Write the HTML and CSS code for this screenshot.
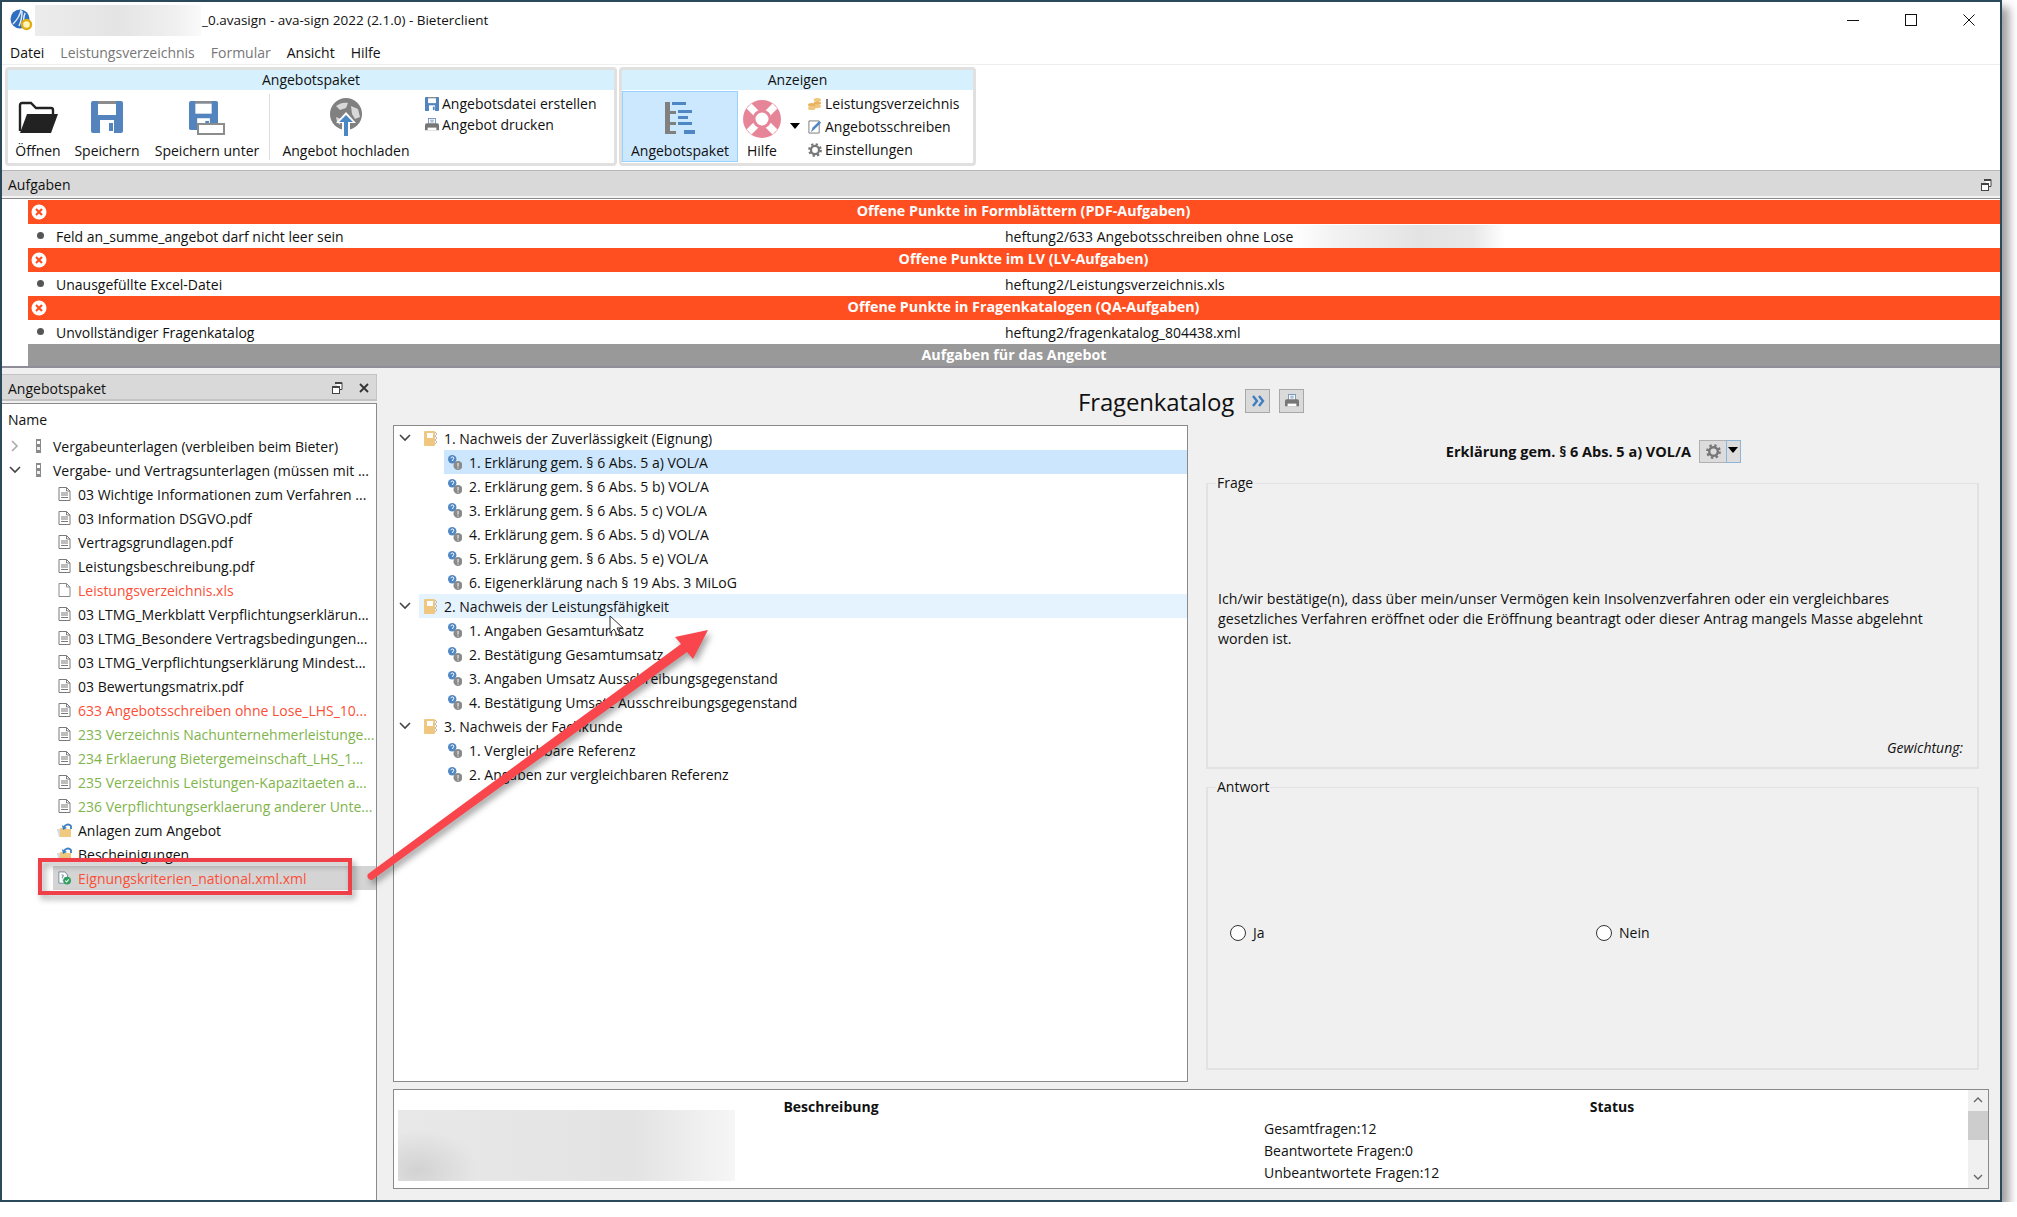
FILE: index.html
```html
<!DOCTYPE html>
<html lang="de">

<head>
    <meta charset="UTF-8" />
    <title>ava-sign 2022 - Bieterclient</title>
    <link rel="stylesheet" href="styles.css">
</head>

<body>
    <svg class="defs" width="0" height="0">
        <symbol id="doc" viewBox="0 0 13 14">
            <path d="M1 .5h7.5L12 4v9.5H1z" fill="#fff" stroke="#7a7a7a" />
            <path d="M8.5 .5V4H12M3 6h7M3 8h7M3 10.5h7" fill="none" stroke="#7a7a7a" />
        </symbol>
        <symbol id="doc-empty" viewBox="0 0 13 14">
            <path d="M1 .5h7.5L12 4v9.5H1z" fill="#fff" stroke="#8a8a8a" />
            <path d="M8.5 .5V4H12" fill="none" stroke="#8a8a8a" />
        </symbol>
        <symbol id="binder" viewBox="0 0 7 14">
            <rect x="1" y="0" width="5" height="14" fill="#8a8a8a" />
            <rect x="2" y="2" width="3" height="3" fill="#fff" />
            <rect x="2" y="8" width="3" height="3" fill="#eee" />
        </symbol>
        <symbol id="attach" viewBox="0 0 15 14">
            <path d="M3 5h4l1 1h6v8H3z" fill="#efca7f" />
            <path d="M0 6h3v8H2z" fill="#d8d8d8" />
            <path d="M7 4.5a4 4 0 0 1 7-1.5v3" fill="none" stroke="#3f7fc0" stroke-width="1.8" />
            <path d="M5 2l1 5 4-2z" fill="#3f7fc0" />
        </symbol>
        <symbol id="xml-ok" viewBox="0 0 15 15">
            <path d="M1 .5h7L11 4v9.5H1z" fill="#fff" stroke="#6b8399" />
            <path d="M4 4h2v2H5v2M5 10h1" fill="none" stroke="#6b8399" />
            <circle cx="10.5" cy="10.5" r="4.5" fill="#2e9e5e" />
            <path d="M8.3 10.5l1.6 1.6 2.6-3" fill="none" stroke="#fff" stroke-width="1.2" />
        </symbol>
        <symbol id="book" viewBox="0 0 13 15">
            <rect x="0" y="0" width="11" height="15" rx="1" fill="#efc77e" />
            <rect x="3" y="2" width="6" height="5" fill="#fff" />
            <path d="M11 1l2 2-2 2 2 2-2 2 2 2-2 2" fill="none" stroke="#bbb" />
        </symbol>
        <symbol id="question" viewBox="0 0 14 15">
            <circle cx="4.2" cy="4.2" r="4.2" fill="#4f87c4" />
            <circle cx="10" cy="10.5" r="4.5" fill="#8a8a8a" />
            <path d="M3 3.2a1.4 1.4 0 1 1 1.7 1.5V6" fill="none" stroke="#fff" />
            <path d="M10 8v3.5M10 12.5v1" stroke="#fff" />
        </symbol>
        <symbol id="chev-down" viewBox="0 0 12 8">
            <path d="M1 1l5 5 5-5" fill="none" stroke="#444" stroke-width="1.6" />
        </symbol>
        <symbol id="chev-right" viewBox="0 0 8 12">
            <path d="M1 1l5 5-5 5" fill="none" stroke="#aaa" stroke-width="1.6" />
        </symbol>
        <symbol id="restore" viewBox="0 0 11 12">
            <path d="M3 .5h7v7H8" fill="#fff" stroke="#444" />
            <rect x="3" y="0" width="7" height="2" fill="#444" />
            <rect x=".5" y="4.5" width="7" height="7" fill="#fff" stroke="#444" />
            <rect x="0" y="4" width="8" height="2" fill="#444" />
        </symbol>
        <symbol id="save" viewBox="0 0 32 32">
            <path d="M0 2a2 2 0 0 1 2-2h28a2 2 0 0 1 2 2v28a2 2 0 0 1-2 2H2a2 2 0 0 1-2-2z" fill="#5384bd" />
            <rect x="7" y="0" width="18" height="3" fill="#8c8c8c" />
            <rect x="7" y="3" width="18" height="11" fill="#fff" />
            <rect x="9" y="19" width="14" height="13" fill="#fff" />
            <rect x="18" y="22" width="4" height="8" fill="#5384bd" />
        </symbol>
        <symbol id="gear" viewBox="0 0 16 16">
            <circle cx="8" cy="8" r="4.6" fill="none" stroke="#777" stroke-width="2.6" />
            <circle cx="8" cy="8" r="6.7" fill="none" stroke="#777" stroke-width="2.4" stroke-dasharray="2.6 2.66" />
        </symbol>
        <symbol id="printer" viewBox="0 0 16 16">
            <rect x="4" y="0.5" width="8" height="7" fill="#fff" stroke="#6f8fb5" />
            <path d="M6 2.5h4M6 4.5h4" stroke="#6f8fb5" />
            <path d="M0 8a2 2 0 0 1 2-2h12a2 2 0 0 1 2 2v6H0z" fill="#777" />
            <rect x="3" y="11" width="10" height="3" fill="#fff" />
        </symbol>
    </svg>

    <div class="window">
        <header class="titlebar">
            <svg class="logo" viewBox="0 0 24 22">
                <circle cx="10" cy="10" r="9.5" fill="#2f6fc0" />
                <path d="M3 15C7 11 10 7 11 1M9 17c2-4 3-8 3-15M14 14c-1-3 0-7 1-10" fill="none" stroke="#dfeafa" stroke-width="1.5" />
                <circle cx="16.5" cy="15.5" r="4.5" fill="#fff6b8" stroke="#e0ad12" stroke-width="2.4" />
            </svg>
            <div class="blur blur-title"></div>
            <span class="title-text">_0.avasign - ava-sign 2022 (2.1.0) - Bieterclient</span>
            <div class="win-controls">
                <svg viewBox="0 0 12 12"><path d="M0 6.5h12" stroke="#111" /></svg>
                <svg viewBox="0 0 12 12"><rect x=".5" y=".5" width="11" height="11" fill="none" stroke="#111" /></svg>
                <svg viewBox="0 0 12 12"><path d="M.5 .5l11 11M11.5 .5l-11 11" stroke="#111" /></svg>
            </div>
        </header>

        <nav class="menubar">
            <a>Datei</a>
            <a class="off">Leistungsverzeichnis</a>
            <a class="off">Formular</a>
            <a>Ansicht</a>
            <a>Hilfe</a>
        </nav>

        <section class="ribbon">
            <div class="rgroup rgroup-paket">
                <div class="rgroup-head">Angebotspaket</div>
                <div class="rgroup-body">
                    <div class="rbtn rbtn-open">
                        <svg class="big folder" viewBox="0 0 40 32">
                            <path d="M2 30V4a2 2 0 0 1 2-2h9l5 5h15a2 2 0 0 1 2 2v4" fill="none" stroke="#222" stroke-width="2.4" />
                            <path d="M9 13h31l-7 19H2z" fill="#222" />
                        </svg>
                        <span>Öffnen</span>
                    </div>
                    <div class="rbtn rbtn-save">
                        <svg class="big save"><use href="#save" /></svg>
                        <span>Speichern</span>
                    </div>
                    <div class="rbtn rbtn-saveas">
                        <svg class="big saveas" viewBox="0 0 36 34">
                            <use href="#save" width="29" height="29" />
                            <rect x="9" y="23" width="26" height="10" fill="#fff" stroke="#8c8c8c" stroke-width="2" />
                        </svg>
                        <span>Speichern unter</span>
                    </div>
                    <div class="rsep"></div>
                    <div class="rbtn rbtn-upload">
                        <svg class="big upload" viewBox="0 0 32 38">
                            <circle cx="16" cy="16" r="16" fill="#808080" />
                            <path d="M6 8c4-3 8-4 12-3l-2 5-6 2zM21 8l7 3 2 8-5 2-3-5zM6 19l5 2-1 6-3-3z" fill="#d8d8d8" />
                            <path d="M16 14l10 11h-6v13h-8V25H6z" fill="#fff" />
                            <path d="M16 17l7 7h-5v14h-4V24H9z" fill="#4a87c5" />
                        </svg>
                        <span>Angebot hochladen</span>
                    </div>
                    <div class="rsmall">
                        <div class="sitem"><svg class="small"><use href="#save" /></svg>Angebotsdatei erstellen</div>
                        <div class="sitem"><svg class="small"><use href="#printer" /></svg>Angebot drucken</div>
                    </div>
                </div>
            </div>
            <div class="rgroup rgroup-view">
                <div class="rgroup-head">Anzeigen</div>
                <div class="rgroup-body">
                    <div class="rbtn rbtn-active">
                        <svg class="big pakettree" viewBox="0 0 30 32">
                            <path d="M0 0h5v32H0zM5 9h6v3H5zM5 20h6v3H5zM5 29h6v3H5z" fill="#808080" />
                            <path d="M7 0h14v3H7zM13 8h14v3H13zM13 14h10v3H13zM13 20h14v3H13zM19 28h11v4H19z" fill="#4f87c4" />
                        </svg>
                        <span>Angebotspaket</span>
                    </div>
                    <div class="rbtn rbtn-help">
                        <svg class="big lifebuoy" viewBox="0 0 38 38">
                            <circle cx="19" cy="19" r="19" fill="#e78598" />
                            <circle cx="19" cy="19" r="9" fill="#fff" />
                            <path d="M6 6l8 8M32 6l-8 8M6 32l8-8M32 32l-8-8" stroke="#fff" stroke-width="7" />
                            <circle cx="19" cy="19" r="8" fill="#fff" stroke="#e78598" stroke-width="3" />
                        </svg>
                        <span>Hilfe</span>
                    </div>
                    <div class="ddarrow"></div>
                    <div class="rsmall rsmall-view">
                        <div class="sitem">
                            <svg class="small" viewBox="0 0 15 14">
                                <ellipse cx="10" cy="2.5" rx="4" ry="2" fill="#efc77e" />
                                <ellipse cx="10" cy="6" rx="4" ry="2" fill="#e8b35c" />
                                <ellipse cx="10" cy="9.5" rx="4" ry="2" fill="#efc77e" />
                                <ellipse cx="4" cy="8" rx="4" ry="2" fill="#e8b35c" />
                                <ellipse cx="4" cy="11.5" rx="4" ry="2" fill="#efc77e" />
                            </svg>Leistungsverzeichnis
                        </div>
                        <div class="sitem">
                            <svg class="small" viewBox="0 0 15 15">
                                <path d="M1 1h11v13H1z" fill="#fff" stroke="#777" />
                                <path d="M3 13l2-5 7-7 2 2-7 7z" fill="#4f87c4" />
                            </svg>Angebotsschreiben
                        </div>
                        <div class="sitem"><svg class="small"><use href="#gear" /></svg>Einstellungen</div>
                    </div>
                </div>
            </div>
        </section>

        <div class="dockhead dockhead-tasks">
            <span>Aufgaben</span>
            <svg class="dockicon"><use href="#restore" /></svg>
        </div>

        <section class="tasks">
            <div class="task-head"><svg class="err" viewBox="0 0 16 16"><circle cx="8" cy="8" r="7.5" fill="#fff" /><path d="M5 5l6 6M11 5l-6 6" stroke="#ff4f21" stroke-width="2.2" /></svg><span>Offene Punkte in Formblättern (PDF-Aufgaben)</span></div>
            <div class="task-row">
                <i></i><span class="task-name">Feld an_summe_angebot darf nicht leer sein</span>
                <span class="task-file">heftung2/633 Angebotsschreiben ohne Lose<b class="blur blur-task"></b></span>
            </div>
            <div class="task-head"><svg class="err" viewBox="0 0 16 16"><circle cx="8" cy="8" r="7.5" fill="#fff" /><path d="M5 5l6 6M11 5l-6 6" stroke="#ff4f21" stroke-width="2.2" /></svg><span>Offene Punkte im LV (LV-Aufgaben)</span></div>
            <div class="task-row">
                <i></i><span class="task-name">Unausgefüllte Excel-Datei</span>
                <span class="task-file">heftung2/Leistungsverzeichnis.xls</span>
            </div>
            <div class="task-head"><svg class="err" viewBox="0 0 16 16"><circle cx="8" cy="8" r="7.5" fill="#fff" /><path d="M5 5l6 6M11 5l-6 6" stroke="#ff4f21" stroke-width="2.2" /></svg><span>Offene Punkte in Fragenkatalogen (QA-Aufgaben)</span></div>
            <div class="task-row">
                <i></i><span class="task-name">Unvollständiger Fragenkatalog</span>
                <span class="task-file">heftung2/fragenkatalog_804438.xml</span>
            </div>
            <div class="task-foot">Aufgaben für das Angebot</div>
        </section>

        <div class="workspace">
            <aside class="side">
                <div class="dockhead dockhead-side">
                    <span>Angebotspaket</span>
                    <svg class="dockicon"><use href="#restore" /></svg>
                    <svg class="dockclose" viewBox="0 0 10 10"><path d="M1 1l8 8M9 1l-8 8" stroke="#333" stroke-width="1.8" /></svg>
                </div>
                <div class="sidetree">
                    <div class="sidename">Name</div>
                    <div class="node"><svg class="chev-r"><use href="#chev-right" /></svg><svg class="binder"><use href="#binder" /></svg>Vergabeunterlagen (verbleiben beim Bieter)</div>
                    <div class="node"><svg class="chev-d"><use href="#chev-down" /></svg><svg class="binder"><use href="#binder" /></svg>Vergabe- und Vertragsunterlagen (müssen mit ...</div>
                    <div class="leaf"><svg><use href="#doc" /></svg>03 Wichtige Informationen zum Verfahren ...</div>
                    <div class="leaf"><svg><use href="#doc" /></svg>03 Information DSGVO.pdf</div>
                    <div class="leaf"><svg><use href="#doc" /></svg>Vertragsgrundlagen.pdf</div>
                    <div class="leaf"><svg><use href="#doc" /></svg>Leistungsbeschreibung.pdf</div>
                    <div class="leaf red"><svg><use href="#doc-empty" /></svg>Leistungsverzeichnis.xls</div>
                    <div class="leaf"><svg><use href="#doc" /></svg>03 LTMG_Merkblatt Verpflichtungserklärun...</div>
                    <div class="leaf"><svg><use href="#doc" /></svg>03 LTMG_Besondere Vertragsbedingungen...</div>
                    <div class="leaf"><svg><use href="#doc" /></svg>03 LTMG_Verpflichtungserklärung Mindest...</div>
                    <div class="leaf"><svg><use href="#doc" /></svg>03 Bewertungsmatrix.pdf</div>
                    <div class="leaf red"><svg><use href="#doc" /></svg>633 Angebotsschreiben ohne Lose_LHS_10...</div>
                    <div class="leaf green"><svg><use href="#doc" /></svg>233 Verzeichnis Nachunternehmerleistunge...</div>
                    <div class="leaf green"><svg><use href="#doc" /></svg>234 Erklaerung Bietergemeinschaft_LHS_1...</div>
                    <div class="leaf green"><svg><use href="#doc" /></svg>235 Verzeichnis Leistungen-Kapazitaeten a...</div>
                    <div class="leaf green"><svg><use href="#doc" /></svg>236 Verpflichtungserklaerung anderer Unte...</div>
                    <div class="leaf leaf-att"><svg><use href="#attach" /></svg>Anlagen zum Angebot</div>
                    <div class="leaf leaf-att"><svg><use href="#attach" /></svg>Bescheinigungen</div>
                    <div class="leaf red selected"><svg><use href="#xml-ok" /></svg>Eignungskriterien_national.xml.xml</div>
                </div>
            </aside>

            <main class="main">
                <div class="cat-head">
                    <h1>Fragenkatalog</h1>
                    <button class="toolbtn">
                        <svg viewBox="0 0 14 14"><path d="M2 2l4 5-4 5M8 2l4 5-4 5" fill="none" stroke="#3f7fc0" stroke-width="2.4" /></svg>
                    </button>
                    <button class="toolbtn">
                        <svg><use href="#printer" /></svg>
                    </button>
                </div>

                <div class="cat-body">
                    <div class="qtree">
                        <div class="qgroup"><svg class="chev-d"><use href="#chev-down" /></svg><svg class="book"><use href="#book" /></svg>1. Nachweis der Zuverlässigkeit (Eignung)</div>
                        <div class="qitem current"><svg><use href="#question" /></svg>1. Erklärung gem. § 6 Abs. 5 a) VOL/A</div>
                        <div class="qitem"><svg><use href="#question" /></svg>2. Erklärung gem. § 6 Abs. 5 b) VOL/A</div>
                        <div class="qitem"><svg><use href="#question" /></svg>3. Erklärung gem. § 6 Abs. 5 c) VOL/A</div>
                        <div class="qitem"><svg><use href="#question" /></svg>4. Erklärung gem. § 6 Abs. 5 d) VOL/A</div>
                        <div class="qitem"><svg><use href="#question" /></svg>5. Erklärung gem. § 6 Abs. 5 e) VOL/A</div>
                        <div class="qitem"><svg><use href="#question" /></svg>6. Eigenerklärung nach § 19 Abs. 3 MiLoG</div>
                        <div class="qgroup hover"><svg class="chev-d"><use href="#chev-down" /></svg><svg class="book"><use href="#book" /></svg>2. Nachweis der Leistungsfähigkeit</div>
                        <div class="qitem"><svg><use href="#question" /></svg>1. Angaben Gesamtumsatz</div>
                        <div class="qitem"><svg><use href="#question" /></svg>2. Bestätigung Gesamtumsatz</div>
                        <div class="qitem"><svg><use href="#question" /></svg>3. Angaben Umsatz Ausschreibungsgegenstand</div>
                        <div class="qitem"><svg><use href="#question" /></svg>4. Bestätigung Umsatz Ausschreibungsgegenstand</div>
                        <div class="qgroup"><svg class="chev-d"><use href="#chev-down" /></svg><svg class="book"><use href="#book" /></svg>3. Nachweis der Fachkunde</div>
                        <div class="qitem"><svg><use href="#question" /></svg>1. Vergleichbare Referenz</div>
                        <div class="qitem"><svg><use href="#question" /></svg>2. Angaben zur vergleichbaren Referenz</div>
                    </div>

                    <div class="detail">
                        <div class="detail-head">
                            <strong>Erklärung gem. § 6 Abs. 5 a) VOL/A</strong>
                            <div class="splitbtn">
                                <span class="split-main"><svg><use href="#gear" /></svg></span>
                                <span class="split-drop"><i class="ddarrow"></i></span>
                            </div>
                        </div>
                        <fieldset class="field field-q">
                            <legend>Frage</legend>
                            <div class="q-inner">
                                <p>Ich/wir bestätige(n), dass über mein/unser Vermögen kein Insolvenzverfahren oder ein vergleichbares<br>gesetzliches Verfahren eröffnet oder die Eröffnung beantragt oder dieser Antrag mangels Masse abgelehnt<br>worden ist.</p>
                                <em>Gewichtung:</em>
                            </div>
                        </fieldset>
                        <fieldset class="field field-a">
                            <legend>Antwort</legend>
                            <div class="a-inner">
                                <label><input type="radio" name="antwort"> Ja</label>
                                <label><input type="radio" name="antwort"> Nein</label>
                            </div>
                        </fieldset>
                    </div>
                </div>

                <div class="summary">
                    <div class="sum-desc">
                        <h2>Beschreibung</h2>
                        <div class="blur blur-desc"></div>
                    </div>
                    <div class="sum-status">
                        <h2>Status</h2>
                        <p>Gesamtfragen:12</p>
                        <p>Beantwortete Fragen:0</p>
                        <p>Unbeantwortete Fragen:12</p>
                    </div>
                    <div class="scrollbar">
                        <svg viewBox="0 0 10 6"><path d="M1 5l4-4 4 4" fill="none" stroke="#666" stroke-width="1.4" /></svg>
                        <div class="scroll-thumb"></div>
                        <svg class="scroll-down" viewBox="0 0 10 6"><path d="M1 1l4 4 4-4" fill="none" stroke="#666" stroke-width="1.4" /></svg>
                    </div>
                </div>
            </main>
        </div>

        <!-- annotation drawn on top of the screenshot -->
        <svg class="annotation" viewBox="0 0 2001 1201">
            <path d="M610 616v17l4-4 3 6 3-1-3-6h6z" fill="#fff" stroke="#333" />
            <g class="marks">
                <rect x="40" y="860" width="310" height="33" fill="none" stroke="#ef3f49" stroke-width="4" />
                <path d="M368 874L681 644L675 637L708 630L693 659L687 652L372 880a4 4 0 0 1-4-6z" fill="#f9464c" />
            </g>
        </svg>
    </div>
</body>

</html>
```

FILE: styles.css
```css
* {
    padding: 0;
    margin: 0;
    box-sizing: border-box;
}

body {
    font-family: "Open Sans", "Noto Sans", Arial, sans-serif;
    font-size: 14px;
    color: #111;
    background-color: #fff;
}

.defs {
    position: absolute;
}

.window {
    position: relative;
    display: flex;
    flex-direction: column;
    width: 2002px;
    height: 1202px;
    border: 2px solid #2a4a5c;
    background-color: #fff;
    box-shadow: 7px 7px 9px rgba(0, 0, 0, .38);
    overflow: visible;
}

.blur {
    display: block;
}

/* title bar */
.titlebar {
    display: flex;
    align-items: center;
    height: 36px;
    flex: none;
}

.logo {
    width: 24px;
    height: 22px;
    margin: 0 1px 0 8px;
}

.blur-title {
    width: 166px;
    height: 31px;
    background: linear-gradient(90deg, #ececec, #e4e4e4 50%, #f0f0f0 85%, #fafafa);
}

.title-text {
    margin-left: 1px;
    font-size: 13.5px;
}

.win-controls {
    display: flex;
    gap: 46px;
    margin-left: auto;
    margin-right: 25px;
}

.win-controls svg {
    width: 12px;
    height: 12px;
}

/* menu */
.menubar {
    display: flex;
    align-items: center;
    gap: 16px;
    height: 27px;
    flex: none;
    padding: 2px 0 0 8px;
    border-bottom: 1px solid #eee;
}

.off {
    color: #777;
}

/* ribbon */
.ribbon {
    display: flex;
    gap: 2px;
    height: 105px;
    flex: none;
    padding: 2px 0 0 3px;
}

.rgroup {
    height: 99px;
    border: 3px solid #e0e0e0;
    border-radius: 4px;
}

.rgroup-paket {
    width: 612px;
}

.rgroup-view {
    width: 357px;
}

.rgroup-head {
    height: 20px;
    line-height: 20px;
    text-align: center;
    background-color: #d6f0fe;
}

.rgroup-body {
    display: flex;
    height: 73px;
}

.rbtn {
    display: flex;
    flex-direction: column;
    align-items: center;
    justify-content: flex-end;
    padding-bottom: 3px;
    white-space: nowrap;
}

.rbtn-open {
    width: 58px;
    margin-left: 1px;
}

.rbtn-open .folder {
    width: 40px;
    height: 32px;
    margin-bottom: 8px;
}

.rbtn-save {
    width: 68px;
    margin-left: 6px;
}

.big.save {
    width: 32px;
    height: 32px;
    margin-bottom: 8px;
}

.rbtn-saveas {
    width: 106px;
    margin-left: 13px;
}

.rbtn-saveas .saveas {
    width: 36px;
    height: 34px;
    margin-bottom: 6px;
}

.rsep {
    width: 1px;
    height: 66px;
    margin: 4px 9px 0 9px;
    background-color: #ddd;
}

.rbtn-upload {
    width: 134px;
}

.rbtn-upload .upload {
    width: 32px;
    height: 38px;
    margin-bottom: 5px;
}

.rsmall {
    display: flex;
    flex-direction: column;
    margin-left: 12px;
    padding-top: 3px;
}

.sitem {
    display: flex;
    align-items: center;
    gap: 3px;
    height: 21px;
    white-space: nowrap;
}

.sitem svg.small {
    width: 14px;
    height: 14px;
    flex: none;
}

.rbtn-active {
    width: 116px;
    height: 71px;
    margin-top: 1px;
    padding-bottom: 1px;
    background-color: #cce8ff;
    border: 1px solid #99d1ff;
}

.pakettree {
    width: 30px;
    height: 32px;
    margin-bottom: 7px;
}

.rbtn-help {
    width: 46px;
    margin-left: 1px;
}

.lifebuoy {
    width: 38px;
    height: 38px;
    margin-bottom: 3px;
}

.ddarrow {
    display: block;
    width: 0;
    height: 0;
    margin: 33px 0 0 5px;
    border-left: 5px solid transparent;
    border-right: 5px solid transparent;
    border-top: 6px solid #000;
}

.rsmall-view {
    margin-left: 8px;
    padding-top: 2px;
}

.rsmall-view .sitem {
    height: 23px;
}

/* dock headers */
.dockhead {
    display: flex;
    align-items: center;
    flex: none;
    padding-left: 6px;
    background-color: #d9d9d9;
    border: 1px solid #c4c4c4;
}

.dockhead-tasks {
    height: 29px;
    border-width: 1px 0;
    border-top-color: #b8b8b8;
    border-bottom-color: #8a8a8a;
    box-shadow: inset 0 -2px #f3f3f3;
}

.dockicon {
    width: 11px;
    height: 12px;
    margin-left: auto;
    margin-right: 8px;
}

.dockhead-side {
    height: 27px;
    padding-top: 2px;
    border-width: 1px 1px 2px 0;
}

.dockhead-side .dockicon {
    margin-right: 16px;
}

.dockclose {
    width: 10px;
    height: 10px;
    margin-right: 7px;
}

/* tasks */
.tasks {
    height: 169px;
    flex: none;
    padding: 1px 0 0 26px;
    border-bottom: 2px solid #8e8e98;
}

.task-head {
    display: flex;
    align-items: center;
    height: 24px;
    padding: 0 0 3px 3px;
    color: #fff;
    font-weight: 700;
    font-size: 14.25px;
    background-color: #ff4f21;
}

.task-head span {
    flex: 1;
    text-align: center;
}

.err {
    width: 16px;
    height: 16px;
    margin-top: 3px;
}

.task-row {
    display: flex;
    align-items: center;
    height: 24px;
    white-space: nowrap;
}

.task-row i {
    width: 7px;
    height: 7px;
    margin: 0 12px 2px 9px;
    border-radius: 50%;
    background-color: #555;
}

.task-name {
    width: 949px;
}

.task-file {
    display: flex;
    align-items: center;
}

.blur-task {
    width: 212px;
    height: 23px;
    background: linear-gradient(90deg, #fff, #f2f2f2 20%, #e3e3e3 60%, #e8e8e8 85%, #fff);
}

.task-foot {
    height: 22px;
    line-height: 22px;
    text-align: center;
    color: #fff;
    font-weight: 700;
    font-size: 14.25px;
    background-color: #999;
}

/* workspace */
.workspace {
    display: flex;
    flex: 1;
    min-height: 0;
    background-color: #f0f0f0;
}

.side {
    display: flex;
    flex-direction: column;
    width: 375px;
    flex: none;
    padding-top: 6px;
}

.sidetree {
    flex: 1;
    margin-top: 2px;
    padding-top: 4px;
    background-color: #fff;
    border-top: 1px solid #8a8a8a;
    border-right: 1px solid #8a8a8a;
    white-space: nowrap;
    overflow: hidden;
}

.sidename {
    height: 24px;
    line-height: 24px;
    margin-bottom: 2px;
    padding-left: 6px;
}

.node,
.leaf {
    display: flex;
    align-items: center;
    height: 24px;
    overflow: hidden;
}

.chev-r {
    width: 8px;
    height: 12px;
    margin: 0 16px 0 9px;
}

.chev-d {
    width: 12px;
    height: 8px;
    margin: 0 14px 0 7px;
}

.binder {
    width: 7px;
    height: 14px;
    margin-right: 11px;
}

.leaf {
    padding-left: 56px;
}

.leaf svg {
    width: 13px;
    height: 14px;
    margin-right: 7px;
    flex: none;
}

.leaf-att svg {
    width: 15px;
    height: 14px;
    margin: 0 6px 0 -1px;
}

.red {
    color: #fb4f38;
}

.green {
    color: #7fb44c;
}

.selected {
    margin-left: 51px;
    padding-left: 5px;
    background-color: #d4d4d4;
}

/* main area */
.main {
    display: flex;
    flex-direction: column;
    flex: 1;
    min-width: 0;
    padding: 21px 11px 11px 16px;
}

.cat-head {
    display: flex;
    align-items: center;
    gap: 9px;
    height: 24px;
    flex: none;
    margin-left: 685px;
}

.cat-head h1 {
    font-size: 24px;
    font-weight: 400;
    white-space: nowrap;
    letter-spacing: -.15px;
    margin-right: 2px;
}

.toolbtn {
    display: flex;
    align-items: center;
    justify-content: center;
    width: 25px;
    height: 24px;
    background-color: #dadada;
    border: 1px solid #a8a8a8;
}

.toolbtn svg {
    width: 14px;
    height: 14px;
}

.cat-body {
    display: flex;
    height: 657px;
    flex: none;
    margin-top: 12px;
}

.qtree {
    width: 795px;
    flex: none;
    background-color: #fff;
    border: 1px solid #8a8a8a;
    white-space: nowrap;
}

.qgroup {
    display: flex;
    align-items: center;
    height: 24px;
}

.qgroup .chev-d {
    margin-left: 5px;
}

.qgroup .book {
    width: 13px;
    height: 15px;
    margin: 0 7px 0 -1px;
}

.qgroup.hover {
    background: linear-gradient(90deg, #fff 25px, #e5f3ff 25px);
}

.qitem {
    display: flex;
    align-items: center;
    height: 24px;
    margin-left: 50px;
    padding-left: 4px;
}

.qitem svg {
    width: 14px;
    height: 15px;
    margin-right: 7px;
}

.current {
    background-color: #cce6fd;
}

.detail {
    flex: 1;
    min-width: 0;
    padding: 0 10px 0 18px;
}

.detail-head {
    display: flex;
    align-items: center;
    justify-content: flex-end;
    height: 48px;
    gap: 8px;
    padding: 4px 238px 0 0;
}

.detail-head strong {
    font-size: 14.5px;
}

.splitbtn {
    display: flex;
    height: 23px;
    background-color: #dcdcdc;
    border: 1px solid #b0b0b0;
}

.split-main {
    display: flex;
    align-items: center;
    justify-content: center;
    width: 27px;
}

.split-main svg {
    width: 15px;
    height: 15px;
}

.split-drop {
    width: 15px;
    margin: -1px;
    border: 1px solid #8fb4da;
}

.split-drop .ddarrow {
    margin: 6px 0 0 1px;
}

.field {
    padding: 0;
    border: 2px solid #e2e2e2;
    border-width: 1px 2px 2px;
}

.field legend {
    margin-left: 8px;
    padding: 0 1px;
    line-height: 20px;
}

.field-q {
    height: 296px;
}

.field-a {
    height: 293px;
    margin-top: 8px;
}

.q-inner {
    display: flex;
    flex-direction: column;
    height: 274px;
    padding: 7px 14px 9px 10px;
}

.q-inner p {
    flex: 1;
    display: flex;
    align-items: center;
    line-height: 20px;
    font-size: 14.2px;
    white-space: nowrap;
}

.q-inner em {
    align-self: flex-end;
    line-height: 20px;
}

.a-inner {
    display: grid;
    grid-template-columns: 366px 1fr;
    align-items: center;
    height: 271px;
    padding-left: 22px;
}

.a-inner label {
    display: flex;
    align-items: center;
    gap: 7px;
}

.a-inner input {
    appearance: none;
    width: 16px;
    height: 16px;
    border: 1px solid #333;
    border-radius: 50%;
    background-color: #fff;
}

.summary {
    display: grid;
    grid-template-columns: 870px 1fr 20px;
    height: 100px;
    flex: none;
    margin-top: 7px;
    background-color: #fff;
    border: 1px solid #8a8a8a;
    overflow: hidden;
}

.summary h2 {
    height: 20px;
    line-height: 20px;
    margin-bottom: 1px;
    font-size: 14px;
    font-weight: 700;
    text-align: center;
}

.sum-desc {
    padding-top: 7px;
}

.sum-desc h2 {
    padding-left: 4px;
}

.blur-desc {
    width: 337px;
    height: 71px;
    margin: -8px 0 0 4px;
    background:
        radial-gradient(ellipse 60px 40px at 20px 60px, #d2d2d2, transparent),
        linear-gradient(90deg, #e8e8e8, #e3e3e3 70%, #f6f6f6);
}

.sum-status {
    padding-top: 7px;
}

.sum-status h2 {
    padding-right: 8px;
}

.sum-status p {
    height: 22px;
    line-height: 22px;
}

.scrollbar {
    display: flex;
    flex-direction: column;
    align-items: center;
    padding-top: 7px;
    background-color: #f0f0f0;
}

.scrollbar svg {
    width: 10px;
    height: 6px;
    flex: none;
}

.scroll-thumb {
    width: 100%;
    height: 29px;
    margin-top: 8px;
    background-color: #cdcdcd;
}

.scroll-down {
    margin-top: auto;
    margin-bottom: 8px;
}

/* annotation */
.annotation {
    position: absolute;
    left: -2px;
    top: -2px;
    width: 2001px;
    height: 1201px;
    pointer-events: none;
    overflow: visible;
}

.marks {
    filter: drop-shadow(3px 4px 3px rgba(0, 0, 0, .35));
}
```
